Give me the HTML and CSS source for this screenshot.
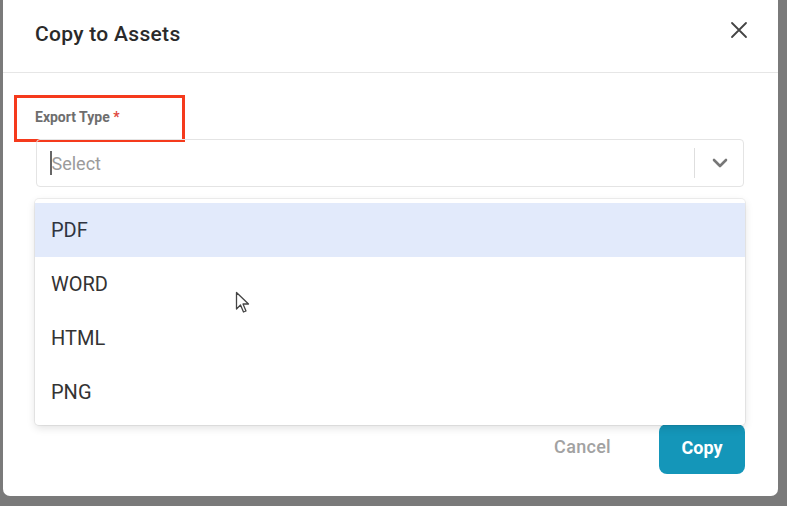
FILE: index.html
```html
<!DOCTYPE html>
<html>
<head>
<meta charset="utf-8">
<link rel="stylesheet" href="styles.css">
</head>
<body>
<div class="modal">
  <div class="modal-header">
    <h2 class="title">Copy to Assets</h2>
    <button class="close" aria-label="Close">
      <svg width="18" height="18" viewBox="0 0 18 18"><path d="M2 2L16 16M16 2L2 16" stroke="#444" stroke-width="1.8" stroke-linecap="round"/></svg>
    </button>
  </div>
  <div class="modal-body">
    <div class="field">
      <div class="highlight-box"></div>
      <label class="label">Export Type <span class="req">*</span></label>
      <div class="select-wrap">
        <div class="select">
          <span class="caret"></span>
          <span class="placeholder">Select</span>
          <span class="sep"></span>
          <svg class="chev" width="16" height="10" viewBox="0 0 16 10"><path d="M2 2L8 8L14 2" fill="none" stroke="#777" stroke-width="2.6" stroke-linecap="round" stroke-linejoin="round"/></svg>
        </div>
        <ul class="menu">
          <li class="item active">PDF</li>
          <li class="item">WORD</li>
          <li class="item">HTML</li>
          <li class="item">PNG</li>
        </ul>
      </div>
    </div>
  </div>
  <div class="modal-footer">
    <button class="btn cancel">Cancel</button>
    <button class="btn copy">Copy</button>
  </div>
  <svg class="pointer" width="16" height="24" viewBox="0 0 16 24"><path d="M1.5 1.5V18L5.5 14L8.5 21L11 20L8 13H13.5Z" fill="#fff" stroke="#444" stroke-width="1.3" stroke-linejoin="round"/></svg>
</div>
</body>
</html>
```
FILE: styles.css
```css
* { box-sizing: border-box; }
html, body { margin: 0; padding: 0; }
body {
  background: #7a7a7a;
  width: 787px;
  height: 506px;
  overflow: hidden;
  font-family: Roboto, "Liberation Sans", sans-serif;
}
.modal {
  position: relative;
  margin-left: 3px;
  width: 775px;
  height: 496px;
  background: #fff;
  border-radius: 0 0 7px 7px;
  display: flex;
  flex-direction: column;
}
.modal-header {
  height: 73px;
  border-bottom: 1px solid #e6e6e6;
  display: flex;
  align-items: center;
  justify-content: space-between;
  padding: 0 28px 4px 32px;
}
.title {
  margin: 0;
  font-size: 21px;
  font-weight: 500;
  color: #2a2a2a;
  letter-spacing: 0.3px;
}
.close {
  border: 0;
  background: none;
  padding: 0;
  width: 22px;
  height: 22px;
  display: flex;
  align-items: center;
  justify-content: center;
  margin-bottom: 8px;
}
.modal-body {
  padding: 34px 34px 0 33px;
  height: 351px;
}
.field { position: relative; }
.highlight-box {
  position: absolute;
  left: -22px;
  top: -12px;
  width: 171px;
  height: 47px;
  border: 3px solid #f53a1c;
}
.label {
  display: block;
  font-size: 14px;
  font-weight: 700;
  color: #6e6e6e;
  margin: 0 0 12px -1px;
  line-height: 20px;
}
.req { color: #e0473d; }
.select-wrap { position: relative; }
.select {
  height: 48px;
  border: 1px solid #e4e4e4;
  border-radius: 4px;
  display: flex;
  align-items: center;
  padding: 0 15px 0 13px;
}
.caret {
  width: 1.5px;
  height: 24px;
  background: #666;
  margin-right: 0;
}
.placeholder {
  flex: 1;
  font-size: 18px;
  color: #9b9b9b;
}
.sep {
  width: 1px;
  height: 30px;
  background: #dedede;
  margin-right: 17px;
}
.chev { display: block; }
.menu {
  position: absolute;
  left: -1px;
  right: -1px;
  top: 60px;
  margin: 0;
  padding: 4px 0 6px;
  list-style: none;
  background: #fff;
  border-radius: 4px;
  box-shadow: 0 0 0 1px rgba(0,0,0,0.06), 0 3px 8px rgba(0,0,0,0.12);
  z-index: 2;
}
.item {
  height: 54px;
  display: flex;
  align-items: center;
  padding-left: 16px;
  font-size: 20px;
  color: #333;
}
.item.active { background: #e2eafb; color: #2f3440; }
.modal-footer {
  display: flex;
  justify-content: flex-end;
  align-items: flex-start;
  gap: 28px;
  padding: 0 33px 0 0;
}
.btn {
  border: 0;
  font-family: inherit;
  font-size: 18px;
  font-weight: 700;
  height: 50px;
  padding-bottom: 5px;
  cursor: pointer;
}
.cancel {
  background: none;
  color: #a2a2a2;
  padding: 0 20px 5px;
  font-weight: 500;
  letter-spacing: 0.3px;
}
.copy {
  background: #1496b9;
  color: #fff;
  width: 86px;
  border-radius: 8px;
}
.pointer {
  position: absolute;
  left: 232px;
  top: 291px;
  z-index: 3;
}
```
